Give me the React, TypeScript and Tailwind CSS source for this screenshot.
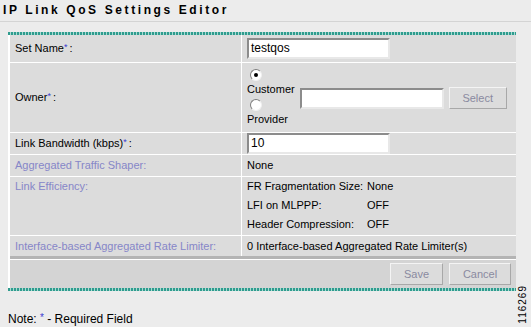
import React from 'react';

const teal =
  'h-[3px] bg-[repeating-linear-gradient(90deg,#2f9c8e_0_2px,#a9d9d2_2px_3px)]';

function Req() {
  return <sup className="text-[9px] text-[#3b3bd0] relative -top-[2px] mr-[2px]">*</sup>;
}

function Row({
  label,
  children,
  dim,
  h,
  top,
}: {
  label: React.ReactNode;
  children: React.ReactNode;
  dim?: boolean;
  h: string;
  top?: boolean;
}) {
  return (
    <div className={`flex border-b border-white ${h}`}>
      <div
        className={`w-[232px] shrink-0 border-r border-white px-[5px] flex ${
          top ? 'items-start pt-[3px]' : 'items-center'
        } ${dim ? 'text-[#8686c8]' : 'text-black'}`}
      >
        {label}
      </div>
      <div className={`flex-1 px-[5px] flex ${top ? 'items-start' : 'items-center'}`}>
        {children}
      </div>
    </div>
  );
}

function Btn({ children, w }: { children: React.ReactNode; w: string }) {
  return (
    <div
      className={`${w} h-[22px] flex items-center justify-center border border-t-[#f4f4f4] border-l-[#f4f4f4] border-r-[#a8a8a8] border-b-[#a8a8a8] bg-[#dcdcdc] text-[11px] text-[#8a8aa0]`}
    >
      {children}
    </div>
  );
}

function Radio({ on }: { on?: boolean }) {
  return (
    <span className="w-[12px] h-[12px] rounded-full bg-white border border-t-[#808080] border-l-[#808080] border-r-[#f0f0f0] border-b-[#f0f0f0] flex items-center justify-center">
      {on && <span className="w-[4px] h-[4px] rounded-full bg-black" />}
    </span>
  );
}

function Field({ w, value }: { w: string; value?: string }) {
  return (
    <div
      className={`${w} h-[21px] bg-white border-2 border-t-[#8c8c8c] border-l-[#8c8c8c] border-r-[#e8e8e8] border-b-[#e8e8e8] px-[2px] flex items-center text-[12px]`}
    >
      {value}
    </div>
  );
}

export default function App() {
  return (
    <div
      className="w-[531px] h-[327px] bg-[#ececec] relative overflow-hidden text-[11px] leading-[13px]"
      style={{ fontFamily: '"Liberation Sans", Arial, sans-serif' }}
    >
      <div className="h-[22px] border-b border-[#d4d4d4] pl-[3px] flex items-center font-bold text-[12px] tracking-[2.6px]">
        IP Link QoS Settings Editor
      </div>
      <div className="ml-[8px] w-[508px] mt-[10px]">
        <div className={teal} />
        <div className="bg-[#dcdcdc] border-l-2 border-white">
          <Row h="h-[28px]" label={<span>Set Name<Req />:</span>}>
            <Field w="w-[143px]" value="testqos" />
          </Row>
          <Row h="h-[70px]" label={<span>Owner<Req />:</span>}>
            <div className="flex items-start self-start pt-[6px]">
              <div className="flex flex-col">
                <div className="pl-[3px]">
                  <Radio on />
                </div>
                <span className="mt-[2px]">Customer</span>
                <div className="pl-[3px] mt-[3px]">
                  <Radio />
                </div>
                <span className="mt-[2px]">Provider</span>
              </div>
              <div className="ml-[5px] mt-[18px] flex items-center gap-[5px]">
                <Field w="w-[144px]" />
                <Btn w="w-[58px]">Select</Btn>
              </div>
            </div>
          </Row>
          <Row h="h-[22px]" label={<span>Link Bandwidth (kbps)<Req />:</span>}>
            <Field w="w-[143px]" value="10" />
          </Row>
          <Row h="h-[22px]" dim label="Aggregated Traffic Shaper:">
            None
          </Row>
          <Row h="h-[59px]" dim top label="Link Efficiency:">
            <div className="grid grid-cols-[120px_auto] gap-y-[6px] pt-[3px] whitespace-nowrap">
              <span>FR Fragmentation Size:</span>
              <span>None</span>
              <span>LFI on MLPPP:</span>
              <span>OFF</span>
              <span>Header Compression:</span>
              <span>OFF</span>
            </div>
          </Row>
          <div className="flex h-[20px]">
            <div className="w-[232px] shrink-0 border-r border-white px-[5px] flex items-center text-[#8686c8]">
              Interface-based Aggregated Rate Limiter:
            </div>
            <div className="flex-1 px-[5px] flex items-center">
              0 Interface-based Aggregated Rate Limiter(s)
            </div>
          </div>
          <div className="h-[3px] bg-[#b4b4b4]" />
          <div className="h-[29px] bg-[#d4d4d4] border-t border-white flex items-center justify-end gap-[6px] pr-[5px]">
            <Btn w="w-[53px]">Save</Btn>
            <Btn w="w-[62px]">Cancel</Btn>
          </div>
        </div>
        <div className={teal} />
      </div>
      <div className="ml-[8px] mt-[22px] text-[12px]">
        Note: <span className="text-[10px] text-[#3b3bd0] relative -top-[2px]">*</span> - Required Field
      </div>
      <div className="absolute right-[2px] bottom-[3px] text-[10px] tracking-[1px] [writing-mode:vertical-rl] rotate-180">
        116269
      </div>
    </div>
  );
}
